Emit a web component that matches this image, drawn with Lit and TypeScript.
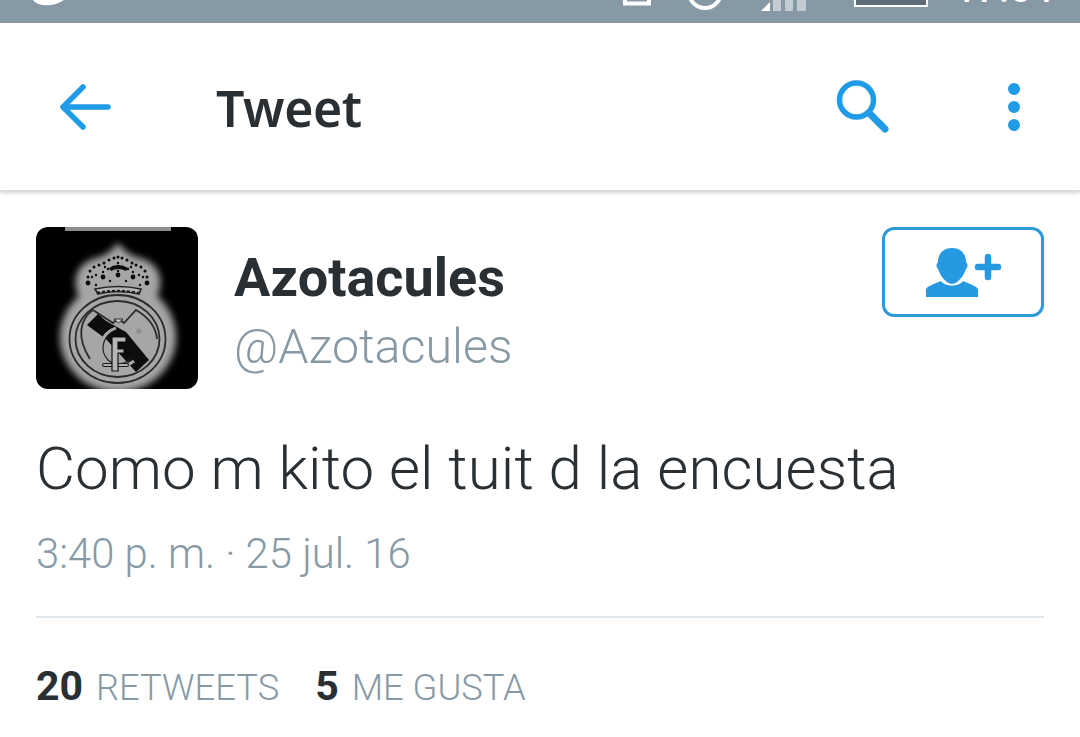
import { LitElement, html, css, svg } from "lit";
import { customElement } from "lit/decorators.js";

@customElement("app-root")
export class AppRoot extends LitElement {
  static styles = css`
    :host { display: block; width: 1080px; height: 737px; overflow: hidden; background: #fff; font-family: Roboto, sans-serif; color: #292f33; }
    .status { height: 23px; background: #8899a6; position: relative; overflow: hidden; }
    .status svg { position: absolute; left: 0; top: 0; }
    .time { position: absolute; left: 955px; top: -30px; color: #fff; font: 500 37px/40px Roboto, sans-serif; letter-spacing: 1px; }
    .bar { height: 168px; box-sizing: border-box; border-bottom: 1px solid #d8d8d8; box-shadow: 0 2px 4px rgba(0,0,0,.18); display: flex; align-items: center; padding: 0 0 0 58px; position: relative; }
    .back { width: 54px; height: 46px; display: block; }
    .title { margin-left: 104px; font: 600 50px/60px "Noto Sans", sans-serif; flex: 1; letter-spacing: -.4px; padding-top: 2px; }
    .search { width: 54px; height: 54px; margin-right: 117px; }
    .more { width: 14px; height: 50px; margin-right: 59px; }
    .content { padding: 36px 36px 0; }
    .head { display: flex; align-items: flex-start; }
    .avatar { width: 162px; height: 162px; flex: none; border-radius: 12px; display: block; }
    .names { margin-left: 36px; flex: 1; padding-top: 16px; }
    .name { font: 700 54px/70px Roboto, sans-serif; }
    .handle { font: 300 48.4px/68px Roboto, sans-serif; color: #8899a6; }
    .follow { width: 162px; height: 90px; box-sizing: border-box; border: 3px solid #2e9bd8; border-radius: 12px; display: flex; align-items: center; justify-content: center; }
    .follow svg { width: 76px; height: 49px; display: block; margin-left: 2px; }
    .tweet { margin-top: 44px; font: 300 60px/72px Roboto, sans-serif; letter-spacing: .1px; }
    .date { margin-top: 24px; font: 300 41.8px/50px Roboto, sans-serif; color: #8899a6; }
    .rule { height: 1.5px; background: #e1e8ed; margin-top: 37px; }
    .stats { margin-top: 41px; display: flex; align-items: baseline; }
    .num { font: 700 41px/54px Roboto, sans-serif; }
    .lab { font: 300 36.3px/54px Roboto, sans-serif; color: #8899a6; margin-left: 13px; margin-right: 36px; }
  `;

  render() {
    return html`
      <div class="status">
        <svg width="1080" height="23" fill="none">
          <path d="M33 0 C38 7 54 7 64 0 Z" fill="#fff"/>
          <path d="M625 -6 V3.5 H649 V-6" stroke="#fff" stroke-width="4"/>
          <circle cx="705" cy="-8" r="16" stroke="#fff" stroke-width="4"/>
          <path d="M761 11 L770 2 V11 Z" fill="#fff"/>
          <path d="M773 0 H781 V11 H773 Z M785 0 H793 V11 H785 Z M797 0 H806 V11 H797 Z" fill="#c3ccd3"/>
          <path d="M855 -2 V6 H927 V-2" stroke="#fff" stroke-width="2" fill="#5e6b75"/>
        </svg>
        <span class="time">17:54</span>
      </div>
      <div class="bar">
        <svg class="back" viewBox="0 0 54 46" fill="none" stroke="#1f9be8" stroke-width="5.5" stroke-linecap="round" stroke-linejoin="round">
          <path d="M5 23 H50 M25 3 L5 23 L25 43"/>
        </svg>
        <div class="title">Tweet</div>
        <svg class="search" viewBox="0 0 54 54" fill="none" stroke="#1f9be8">
          <circle cx="20.5" cy="20" r="17" stroke-width="5.5"/>
          <path d="M35 35 L49 49" stroke-width="7" stroke-linecap="round"/>
        </svg>
        <svg class="more" viewBox="0 0 14 50" fill="#1f9be8">
          <circle cx="7" cy="7" r="6"/><circle cx="7" cy="25" r="6"/><circle cx="7" cy="43" r="6"/>
        </svg>
      </div>
      <div class="content">
        <div class="head">
          ${this.avatar()}
          <div class="names">
            <div class="name">Azotacules</div>
            <div class="handle">@Azotacules</div>
          </div>
          <div class="follow">
            <svg viewBox="0 0 76 49" fill="#2599e2">
              <path d="M26 0 C35 0 40 6 40 14 C42 16 42 19 40 21 C38 27 32 36 26 36 C20 36 14 27 12 21 C10 19 10 16 12 14 C12 6 17 0 26 0 Z"/>
              <path d="M0 49 V42 C0 38 9 36 15 33 C19 39 33 39 37 33 C43 36 52 38 52 42 V49 Z"/>
              <path d="M62 9 V29 M52 19 H72" stroke="#2599e2" stroke-width="6.5" stroke-linecap="round"/>
            </svg>
          </div>
        </div>
        <div class="tweet">Como m kito el tuit d la encuesta</div>
        <div class="date">3:40 p. m. · 25 jul. 16</div>
        <div class="rule"></div>
        <div class="stats">
          <span class="num">20</span><span class="lab">RETWEETS</span>
          <span class="num">5</span><span class="lab">ME GUSTA</span>
        </div>
      </div>
    `;
  }

  avatar() {
    const outer = [[52,50],[54,44],[58,40],[63,38],[68,36],[73,33],[78,31],[82,30],[86,31],[91,33],[96,36],[100,38],[105,40],[109,44],[111,50]];
    const inner = [[67,45],[69,40],[72,42],[77,40],[82,39],[87,40],[92,42],[95,40],[97,45],[82,36],[82,44],[60,48],[56,50],[103,48],[107,50],[74,54],[90,54],[60,58],[104,58]];
    const big = [[52,56],[67,50],[82,48],[97,50],[111,56]];
    return svg`<svg class="avatar" viewBox="0 0 162 162" xmlns="http://www.w3.org/2000/svg">
      <defs>
        <filter id="b" x="-20%" y="-20%" width="140%" height="140%"><feGaussianBlur stdDeviation="3.5"/></filter>
        <filter id="s" x="-5%" y="-5%" width="110%" height="110%"><feGaussianBlur stdDeviation=".5"/></filter>
      </defs>
      <rect width="162" height="162" fill="#000"/>
      <rect x="29" y="0" width="106" height="4" fill="#8e8e8e"/>
      <g fill="#a6a6a6" filter="url(#b)">
        <ellipse cx="82" cy="110" rx="58" ry="55"/>
        <path d="M44 72 C33 50 44 35 60 31 C70 29 76 23 82 16 C88 23 94 29 104 31 C120 35 131 50 120 72 Z"/>
      </g>
      <g filter="url(#s)">
        <g fill="#111">
          ${outer.map(([x, y]) => svg`<circle cx=${x} cy=${y} r="1.5"/>`)}
          ${inner.map(([x, y]) => svg`<circle cx=${x} cy=${y} r="1.2"/>`)}
          ${big.map(([x, y]) => svg`<circle cx=${x} cy=${y} r="2.4"/>`)}
        </g>
        <path d="M73 41 Q82 35 92 41 L90 44 Q82 40 75 44 Z" fill="#111"/>
        <path d="M59 62 Q82 57 105 62 L103 67 Q82 62 62 67 Z" fill="#b4b4b4" stroke="#222" stroke-width="1.6"/>
        <path d="M61 66 Q82 62 103 66" fill="none" stroke="#1a1a1a" stroke-width="2.4" stroke-dasharray="3 2"/>
        <g fill="none" stroke="#2a2a2a" stroke-width="1.8">
          <ellipse cx="81.5" cy="112" rx="48" ry="44"/>
          <ellipse cx="81.5" cy="112" rx="42" ry="38"/>
          <path d="M54 132 C40 110 44 92 57 83"/>
          <path d="M57 83 L77 96 Q82 90 88 96 L100 83 C112 90 120 100 121 112"/>
        </g>
        <path d="M62 87 L70 94 L90 105 L113 133 L100 145 L70 112 L51 98 Z" fill="#080808"/>
        <path d="M80 101 C66 106 58 124 70 136 C80 144 90 140 98 134" fill="none" stroke="#a6a6a6" stroke-width="3.2"/>
        <path d="M80 103 C68 108 62 122 72 133 C80 140 88 137 95 132" fill="none" stroke="#222" stroke-width="1.2"/>
        <path d="M68 138 H91" stroke="#1c1c1c" stroke-width="4" stroke-linecap="round"/>
        <path d="M68 138 H91" stroke="#b0b0b0" stroke-width="1.8" stroke-linecap="round"/>
        <path d="M76 110 H90 V115 H82 V122 H88 V126 H82 V144 H76 Z" fill="#b6b6b6" stroke="#111" stroke-width="1.2"/>
        <path d="M78 92 H87 L82.5 96 Z" fill="#d0d0d0" stroke="#2c2c2c" stroke-width="1"/>
        <circle cx="103" cy="104" r="2.5" fill="#8e8e8e"/>
      </g>
    </svg>`;
  }
}
